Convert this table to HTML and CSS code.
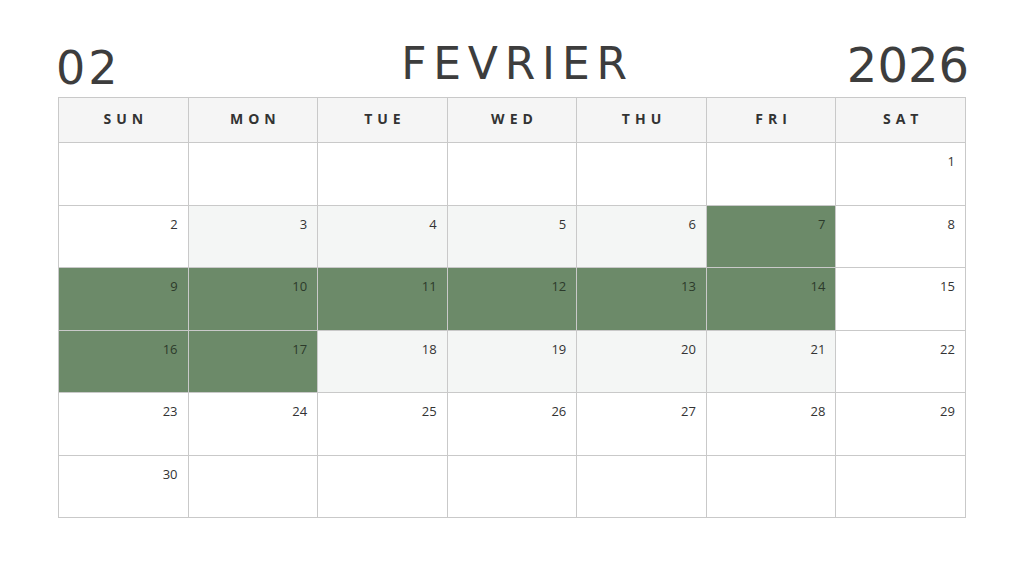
FILE: index.html
```html
<!DOCTYPE html>
<html lang="fr">
<head>
<meta charset="utf-8">
<title>Février 2026</title>
<link rel="stylesheet" href="styles.css">
</head>
<body>
<div class="page">
  <div class="title">
    <span class="month-num">02</span>
    <span class="month-name">FEVRIER</span>
    <span class="year">2026</span>
  </div>
  <div class="cal">
    <div class="head">SUN</div><div class="head">MON</div><div class="head">TUE</div><div class="head">WED</div><div class="head">THU</div><div class="head">FRI</div><div class="head">SAT</div>

    <div class="day"></div><div class="day"></div><div class="day"></div><div class="day"></div><div class="day"></div><div class="day"></div><div class="day">1</div>

    <div class="day">2</div><div class="day light">3</div><div class="day light">4</div><div class="day light">5</div><div class="day light">6</div><div class="day green">7</div><div class="day">8</div>

    <div class="day green">9</div><div class="day green">10</div><div class="day green">11</div><div class="day green">12</div><div class="day green">13</div><div class="day green">14</div><div class="day">15</div>

    <div class="day green">16</div><div class="day green">17</div><div class="day light">18</div><div class="day light">19</div><div class="day light">20</div><div class="day light">21</div><div class="day">22</div>

    <div class="day">23</div><div class="day">24</div><div class="day">25</div><div class="day">26</div><div class="day">27</div><div class="day">28</div><div class="day">29</div>

    <div class="day">30</div><div class="day"></div><div class="day"></div><div class="day"></div><div class="day"></div><div class="day"></div><div class="day"></div>
  </div>
</div>
</body>
</html>
```

FILE: styles.css
```css
* { box-sizing: border-box; }
html, body { margin: 0; padding: 0; background: #ffffff; }
body { font-family: "Open Sans", "DejaVu Sans", sans-serif; color: #3d3d3d; }

.page {
  width: 1024px;
  height: 576px;
  padding: 36px 57px 0 57px;
}

.title {
  display: grid;
  grid-template-columns: 1fr auto 1fr;
  align-items: end;
  height: 61px;
  line-height: 1;
  font-family: "DejaVu Sans", sans-serif;
  color: #3d3d3d;
}
.month-num {
  font-size: 46px;
  letter-spacing: 3px;
  margin: 0 0 6px -1px;
  justify-self: start;
}
.month-name {
  font-size: 44px;
  letter-spacing: 6.8px;
  margin: 0 -7px 11px 4px;
}
.year {
  font-size: 48px;
  margin: 0 -2px 8px 0;
  justify-self: end;
}

.cal {
  margin-left: 1px;
  width: 908px;
  height: 421px;
  display: grid;
  grid-template-columns: repeat(7, 1fr);
  grid-template-rows: 44px repeat(6, 1fr);
  gap: 1px;
  background: #c9c9c9;
  border: 1px solid #c9c9c9;
}

.head {
  background: #f5f5f5;
  display: flex;
  align-items: center;
  justify-content: center;
  font-weight: 700;
  font-size: 14px;
  letter-spacing: 5px;
  padding-left: 5px;
  padding-bottom: 3px;
  color: #333;
}

.day {
  background: #ffffff;
  text-align: right;
  padding: 9px 10px 0 0;
  font-size: 13px;
  color: #333;
}
.day.light { background: #f4f6f5; }
.day.green { background: #6c8a69; color: #2c3a2b; }
```
